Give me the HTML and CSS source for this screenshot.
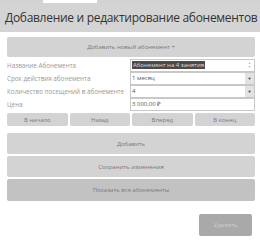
FILE: index.html
```html
<!DOCTYPE html>
<html lang="ru">
<head>
  <meta charset="UTF-8" />
  <title>Абонементы</title>
  <link rel="stylesheet" href="styles.css">
</head>
<body>
  <div class="tabs">
    <div class="tab"></div>
  </div>
  <div class="header">
    <h2>Добавление и редактирование абонементов</h2>
  </div>

  <div class="content">
    <button class="btn btn-new">Добавить новый абонемент +</button>

    <div class="form">
      <label>Название Абонемента</label>
      <div class="field">
        <span class="selected">Абонемент на 4 занятия</span>
        <span class="spin"><i>&#9650;</i><i>&#9660;</i></span>
      </div>

      <label>Срок действия абонемента</label>
      <div class="field">
        <span>1 месяц</span>
        <span class="drop">&#9660;</span>
      </div>

      <label>Количество посещений в абонементе</label>
      <div class="field">
        <span>4</span>
        <span class="drop">&#9660;</span>
      </div>

      <label>Цена</label>
      <div class="field">
        <span>3 000,00 ₽</span>
      </div>
    </div>

    <div class="nav">
      <button class="btn">В начало</button>
      <button class="btn">Назад</button>
      <button class="btn">Вперед</button>
      <button class="btn">В конец</button>
    </div>

    <div class="actions">
      <button class="btn btn-big">Добавить</button>
      <button class="btn btn-big">Сохранить изменения</button>
      <button class="btn btn-big btn-dark">Показать все абонементы</button>
    </div>

    <div class="footer">
      <button class="btn btn-delete">Удалить</button>
    </div>
  </div>
</body>
</html>
```

FILE: styles.css
```css
body {
  font-family: "Open Sans", sans-serif;
  background-color: white;
  margin: 0;
  width: 260px;
}

.tabs {
  height: 3px;
  background-color: #d2d2d2;
}

.tab {
  margin-left: 43px;
  width: 54px;
  height: 3px;
  background-color: white;
}

.header {
  height: 29px;
  background-color: #d4d4d4;
  display: flex;
  align-items: center;
  padding-left: 5px;
}

h2 {
  margin: 0;
  font-size: 12px;
  font-weight: normal;
  color: #333;
  white-space: nowrap;
  letter-spacing: -0.3px;
}

.content {
  padding: 5px 5px 0 7px;
}

.btn {
  font-family: "Open Sans", sans-serif;
  font-size: 6px;
  color: #7a7a7a;
  background-color: #d3d3d3;
  border: none;
  border-radius: 2px;
  padding: 0;
  cursor: pointer;
}

.btn-new {
  width: 100%;
  height: 20px;
  display: block;
}

.form {
  display: grid;
  grid-template-columns: 123px 1fr;
  grid-auto-rows: 12px;
  row-gap: 1px;
  margin-top: 2px;
  align-items: center;
}

.form label {
  font-size: 6.3px;
  color: #999;
  white-space: nowrap;
}

.field {
  height: 11px;
  border: 1px solid #c8c8c8;
  display: flex;
  align-items: center;
  justify-content: space-between;
  font-size: 6px;
  color: #555;
  padding-left: 1px;
  background-color: white;
}

.selected {
  background-color: #4a4a4a;
  color: #ddd;
  padding: 0 1px;
}

.spin {
  display: flex;
  flex-direction: column;
  font-size: 3px;
  color: #aaa;
  width: 9px;
  align-items: center;
  line-height: 4px;
}

.spin i {
  font-style: normal;
}

.drop {
  width: 9px;
  height: 11px;
  background-color: #e2e2e2;
  font-size: 4px;
  color: #333;
  display: flex;
  align-items: center;
  justify-content: center;
}

.nav {
  display: grid;
  grid-template-columns: repeat(4, 1fr);
  gap: 2px;
  margin-top: 3px;
}

.nav .btn {
  height: 13px;
}

.actions {
  display: flex;
  flex-direction: column;
  gap: 2px;
  margin-top: 7px;
}

.btn-big {
  height: 21px;
}

.btn-dark {
  background-color: #c2c2c2;
  height: 22px;
}

.footer {
  display: flex;
  justify-content: flex-end;
  margin-top: 13px;
  padding-right: 3px;
}

.btn-delete {
  width: 53px;
  height: 22px;
  background-color: #a9a9a9;
  color: #cfcfcf;
}
```
